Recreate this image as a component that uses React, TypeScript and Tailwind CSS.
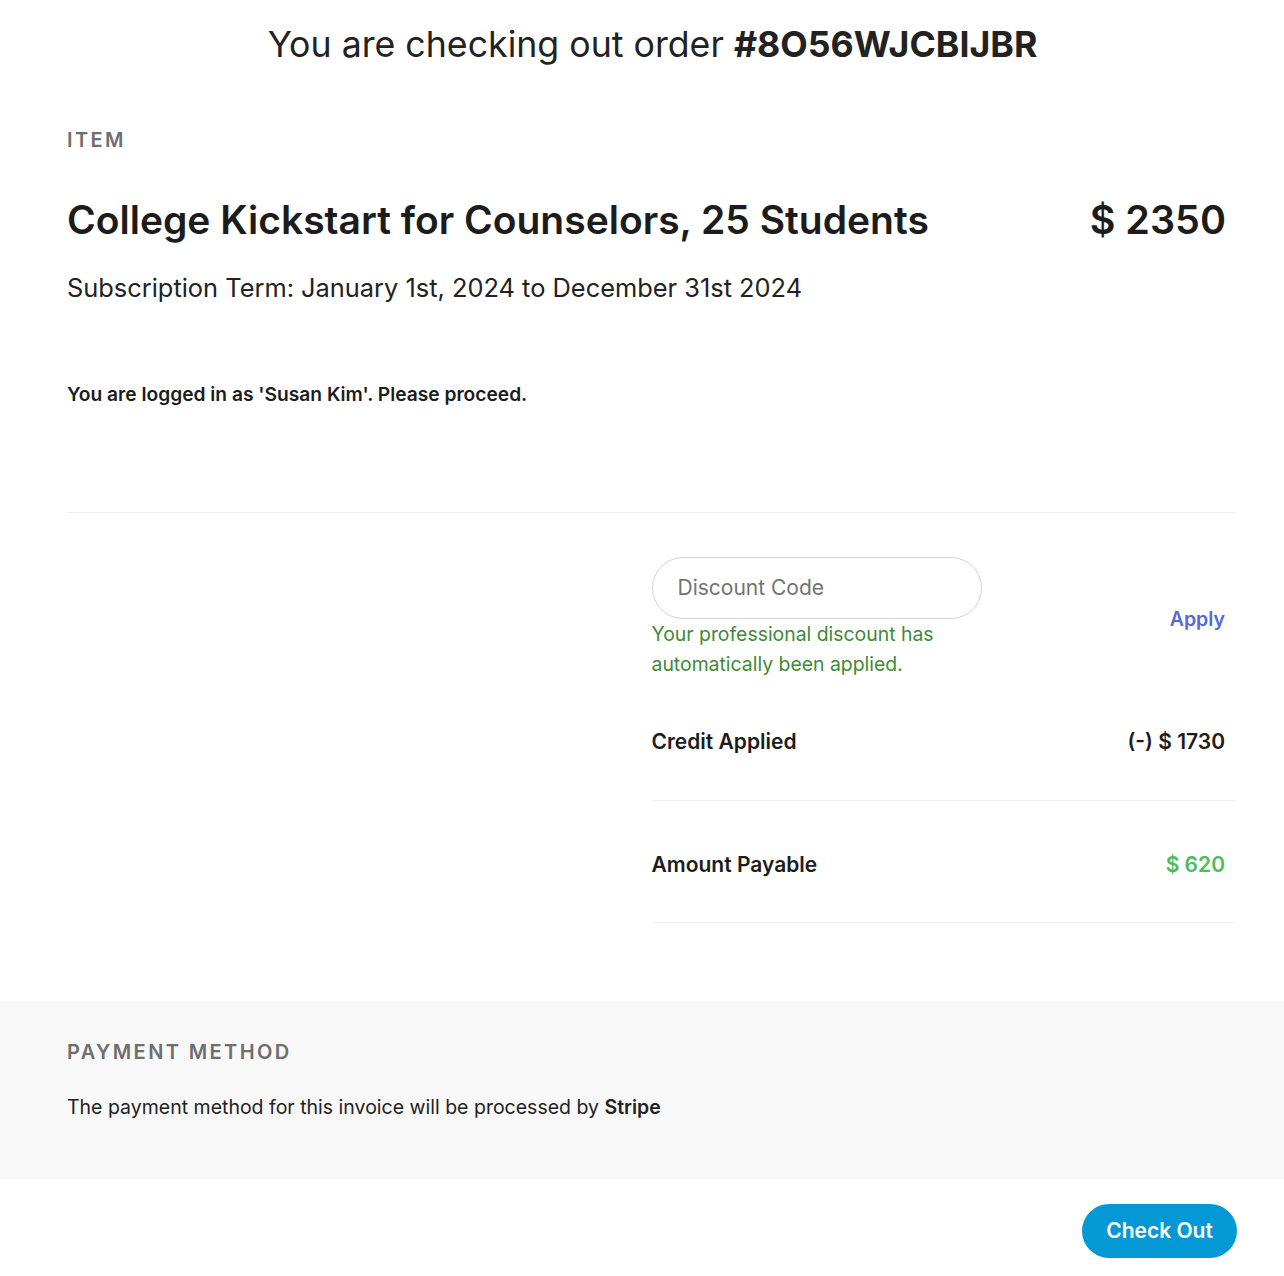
import React from "react";

export default function App() {
  return (
    <div className="min-h-[1276px] bg-white text-[#1f1f1f]" style={{ fontFamily: "Inter, 'Noto Sans', sans-serif" }}>
      <div className="pl-[21px] pt-[22px] text-center text-[35.7px] leading-[44px] text-[#222]">
        You are checking out order <span className="font-bold">#8O56WJCBIJBR</span>
      </div>

      <div className="px-[48px]">
        <div className="pl-[19px] pr-[10px]">
          <div className="mt-[59px] text-[20px] font-semibold tracking-[0.12em] text-[#6e6e6e] leading-[30px]">ITEM</div>
          <div className="mt-[42px] flex items-center justify-between">
            <div className="text-[39px] font-semibold leading-[46px] text-[#1c1c1c]">College Kickstart for Counselors, 25 Students</div>
            <div className="text-[39.5px] font-semibold leading-[46px] text-[#1c1c1c]">$ 2350</div>
          </div>
          <div className="mt-[29px] text-[25.4px] leading-[32px] text-[#222]">Subscription Term: January 1st, 2024 to December 31st 2024</div>
          <div className="mt-[76px] text-[19.2px] font-semibold leading-[28px] text-[#1c1c1c]">You are logged in as 'Susan Kim'. Please proceed.</div>
        </div>
        <div className="ml-[19px] mt-[104px] h-px bg-[#f0f0f0]" />

        <div className="ml-[19px] grid grid-cols-2">
          <div />
          <div>
            <div className="mt-[44px] flex items-end justify-between pr-[11px]">
              <div>
                <div className="flex h-[62px] w-[330px] items-center rounded-full border border-[#d4d4d4] pl-[25px] text-[21px] text-[#737373]">Discount Code</div>
                <div className="mt-0 text-[19.4px] leading-[30px] text-[#3e8a37]">
                  Your professional discount has<br />automatically been applied.
                </div>
              </div>
              <div className="mb-[45px] text-[19.5px] font-semibold text-[#5468e0]">Apply</div>
            </div>
            <div className="mt-[48px] flex justify-between pr-[11px] text-[21px] font-semibold leading-[30px] text-[#1c1c1c]">
              <span>Credit Applied</span>
              <span>(-) $ 1730</span>
            </div>
            <div className="mt-[43px] h-px bg-[#f0f0f0]" />
            <div className="mt-[49px] flex justify-between pr-[11px] text-[21px] font-semibold leading-[30px] text-[#1c1c1c]">
              <span>Amount Payable</span>
              <span className="text-[#4cbd5d]">$ 620</span>
            </div>
            <div className="mt-[42px] h-px bg-[#f0f0f0]" />
          </div>
        </div>
      </div>

      <div className="mt-[78px] h-[178px] bg-[#f8f8f8] px-[67px] pt-[36px]">
        <div className="text-[20px] font-semibold tracking-[0.12em] leading-[30px] text-[#6e6e6e]">PAYMENT METHOD</div>
        <div className="mt-[25px] text-[19.5px] leading-[30px] text-[#222]">
          The payment method for this invoice will be processed by <span className="font-semibold">Stripe</span>
        </div>
      </div>

      <div className="flex justify-end pl-[48px] pr-[47px] pt-[25px]">
        <button className="h-[54px] w-[155px] rounded-full bg-[#0499d4] text-[21px] font-semibold text-white">Check Out</button>
      </div>
    </div>
  );
}
